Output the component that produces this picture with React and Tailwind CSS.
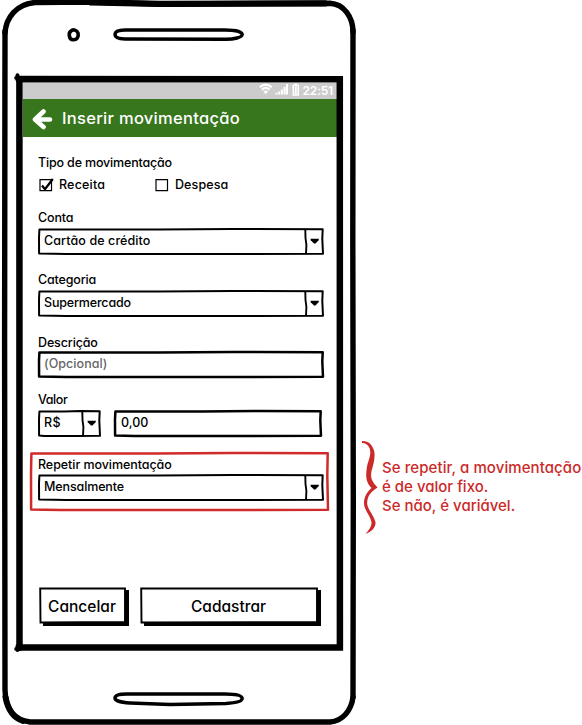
import React from "react";

function PhoneOutline() {
  return (
    <svg className="pointer-events-none absolute inset-0" width="360" height="725" viewBox="0 0 360 725" fill="none" stroke="#000" strokeLinecap="round">
      <path d="M5 33C6 17 17 4 35 2.5L90 2L160 4L330 3.2C344 4 353 17 353 32" strokeWidth="5.4" />
      <path d="M90 2.300L160 3.800L325 3.400" strokeWidth="6.200" />
      <path d="M5 31L4.6 340L5 690C5.500 708 14 720 30 722L330 722C343 721 351.500 710 353 697" strokeWidth="5.4" />
      <path d="M353 30L352.800 240L353.300 500L353 697" strokeWidth="5.400" />
      <path d="M5.500 697C8 711 14 718 23 721" strokeWidth="6" />
      <path d="M19.500 79L339.800 79.200L339.900 647.600L19.500 647.600L19.400 79Z" strokeWidth="6.500" strokeLinecap="butt" />
      <path d="M16.200 78H19M17.500 75.200V80M16.200 649H20M17.500 646V650" strokeWidth="4" />
      <path d="M71 31C73 29 77 30 78 33C79 37 77 40 73 39.800C69 39.500 68 33 71 31Z" strokeWidth="3.600" />
      <path d="M125 30L225 30C235 30 242 31.500 242.200 34.500C242 37.500 234 39.200 226 39.200L125 39C118 39 115 37 115 34.600C115 31.500 119 30 125 30Z" strokeWidth="3.500" />
      <path d="M127 694L225 694C236 694 242 695.500 242.200 698.500C242 702 235 703 226 703.400L170 704.500L130 703C120 702.500 115 700.500 115 698C115 695 119 694 127 694Z" strokeWidth="3.500" />
    </svg>
  );
}

function Stroke({ w, h, thick = 2, color = "#000" }) {
  return (
    <svg className="pointer-events-none absolute left-0 top-0 overflow-visible" width={w} height={h} fill="none" stroke={color} strokeLinejoin="round" strokeLinecap="round">
      <path d={`M1.400 1.500L${w * 0.42} 1.400L${w * 0.68} 1L${w - 1.3} 1.200L${w - 1.7} ${h * 0.4}L${w - 1} ${h - 1.3}L${w * 0.6} ${h - 1}L${w * 0.1} ${h - 1}L1.100 ${h - 1.4}L1 ${h * 0.35}Z`} strokeWidth={thick} />
    </svg>
  );
}

function Select({ value, w, className }) {
  return (
    <div className={`relative flex h-[27px] items-center pl-[6px] ${className}`}>
      <Stroke w={w} h={27} />
      <span className="grow pb-px">{value}</span>
      <svg className="shrink-0" width="20" height="27" viewBox="0 0 20 27">
        <path d="M1.300 1.500L1.500 10L2.400 17L2 26" fill="none" stroke="#000" strokeWidth="1.900" />
        <path d="M6.500 10.800H15L14.500 12.200L11.500 15.600H10L6.800 12.200Z" />
      </svg>
    </div>
  );
}

function Field({ value, w, className }) {
  return (
    <div className={`relative flex h-[27px] items-center ${className}`}>
      <Stroke w={w} h={27} thick={2.5} />
      <span>{value}</span>
    </div>
  );
}

function Check({ checked }) {
  return (
    <svg className="mb-px" width="15" height="16" viewBox="0 0 15 16" fill="none" stroke="#000">
      <path d="M1 2.600H12.500V13.700H1Z" strokeWidth="1.200" />
      {checked && <path d="M3 8.500L6 12.200L13.800 2" strokeWidth="2.300" />}
    </svg>
  );
}

function Button({ children, w, className }) {
  return (
    <button className={`relative flex h-[39px] items-center justify-center text-[15.500px] ${className}`}>
      <svg className="pointer-events-none absolute left-0 top-0" width={w} height="39" fill="none" stroke="#000">
        <path d={`M1.200 1.500L${w - 4} 1.500V35L1.500 35.500Z`} strokeWidth="1.900" />
        <path d={`M4 37H${w - 2}V3`} strokeWidth="4" />
      </svg>
      <span className="relative">{children}</span>
    </button>
  );
}

const label = "flex h-5 items-center pt-[2px]";

export default function App() {
  return (
    <div className="flex h-[725px] w-[582px] overflow-hidden bg-white font-['Inter','Liberation_Sans',sans-serif] text-[12.500px] leading-none text-black [font-feature-settings:'cv11'_1]">
      <div className="relative h-[725px] w-[360px] shrink-0 pl-[23px] pt-[83px]">
        <div className="flex h-[562px] w-[314px] flex-col">
          <div className="flex h-4 shrink-0 items-center justify-end bg-[#cccccc] pr-[4px] text-white">
            <svg className="mb-[2px]" width="40" height="14" viewBox="0 0 40 14" fill="none" stroke="#fff">
              <path d="M.700 4.300Q6.700-1.200 12.700 4.300M2.800 6.700Q6.700 3.100 10.600 6.700" strokeWidth="2.200" />
              <path d="M4.300 8.300Q6.700 6.500 9.100 8.300L6.700 11.200Z" fill="#fff" stroke="none" />
              <path d="M17.500 11.500V9.800M20.200 11.500V8.500M22.900 11.500V6.500M25.600 11.500V4M28 11.500V1" strokeWidth="2" />
              <path d="M34.300 2.500H39.300V12H34.300Z" strokeWidth="1.500" />
              <path d="M36.800 4V11M35.300 1.300H38.300" strokeWidth="1.800" />
            </svg>
            <span className="ml-[4px] text-[12px] font-semibold tracking-[-0.200px]">22:51</span>
          </div>
          <header className="flex h-[38px] shrink-0 items-center bg-[#38761d] pl-[9px] text-white">
            <svg width="22" height="24" viewBox="0 0 22 24" fill="none" stroke="#fff" strokeWidth="4.600" strokeLinecap="round" strokeLinejoin="round">
              <path d="M11.500 5.500L3 13.500L11.500 21M4.500 13.500H18" />
            </svg>
            <h1 className="ml-[8px] text-[16.500px] font-medium tracking-[0.300px]">Inserir movimentação</h1>
          </header>
          <div className="flex flex-col pl-[15px] pt-[15px] font-[450]">
            <div className={`${label} tracking-[-0.170px]`}>Tipo de movimentação</div>
            <div className="mt-[2px] flex h-5 items-center pt-[2px]">
              <div className="flex w-[116px] items-center gap-[5px] pl-px tracking-[0.180px]"><Check checked /><span>Receita</span></div>
              <div className="flex items-center gap-[5px] pl-px tracking-[0.100px]"><Check /><span>Despesa</span></div>
            </div>
            <div className={`mt-[13px] ${label} tracking-[-0.170px]`}>Conta</div>
            <Select value="Cartão de crédito" w={286} className="mt-px w-[286px] tracking-[0.100px]" />
            <div className={`mt-[14px] ${label} tracking-[-0.150px]`}>Categoria</div>
            <Select value="Supermercado" w={286} className="mt-px w-[286px] tracking-[-0.170px]" />
            <div className={`mt-[15px] ${label} tracking-[-0.130px]`}>Descrição</div>
            <Field value="(Opcional)" w={286} className="-mt-px w-[286px] pl-[6px] tracking-[0.050px] text-[#666]" />
            <div className={`mt-[11px] ${label} tracking-[-0.400px]`}>Valor</div>
            <div className="mt-px flex gap-[13px]">
              <Select value="R$" w={63} className="w-[63px] tracking-[0.300px]" />
              <Field value="0,00" w={208} className="w-[208px] pl-[7px]" />
            </div>
            <div className="relative -ml-[8px] mt-[15px] h-[59px] w-[299px] pl-[8px] pt-[2px]">
              <Stroke w={299} h={59} thick={2.500} color="#d02a2a" />
              <div className={`${label} tracking-[-0.060px]`}>Repetir movimentação</div>
              <Select value="Mensalmente" w={286} className="w-[286px] tracking-[-0.120px]" />
            </div>
            <div className="mt-[76px] flex gap-[11px] pl-px">
              <Button w={90} className="w-[90px] pr-[4px]">Cancelar</Button>
              <Button w={181} className="w-[181px] pr-[4px]">Cadastrar</Button>
            </div>
          </div>
        </div>
        <PhoneOutline />
      </div>
      <aside className="mt-[440px] flex h-[95px] text-[#cc2929]">
        <svg className="shrink-0" width="18" height="95" viewBox="0 0 18 95" fill="#cc2929">
          <path d="M2 1C8 .500 12 4 14.200 11C15.500 19 13 25 11.500 31C10.500 37 11 41 17.500 47.500C10 52 7 57 7.200 64C8 70 13 74 15.500 82C16 87 12 92 5.500 94C9 90 12 86 11.500 82C10 75 4 70 4 63C4 56 8 51 11.500 48C6 42 5.500 37 6.800 28C8 20 12 15 9.500 8Q7 3 2 3Z" />
        </svg>
        <div className="ml-[4px] flex flex-col whitespace-nowrap pt-[18px] text-[15px] font-[450] leading-[19px]">
          <span className="tracking-[0.080px]">Se repetir, a movimentação</span>
          <span>é de valor fixo.</span>
          <span>Se não, é variável.</span>
        </div>
      </aside>
    </div>
  );
}
